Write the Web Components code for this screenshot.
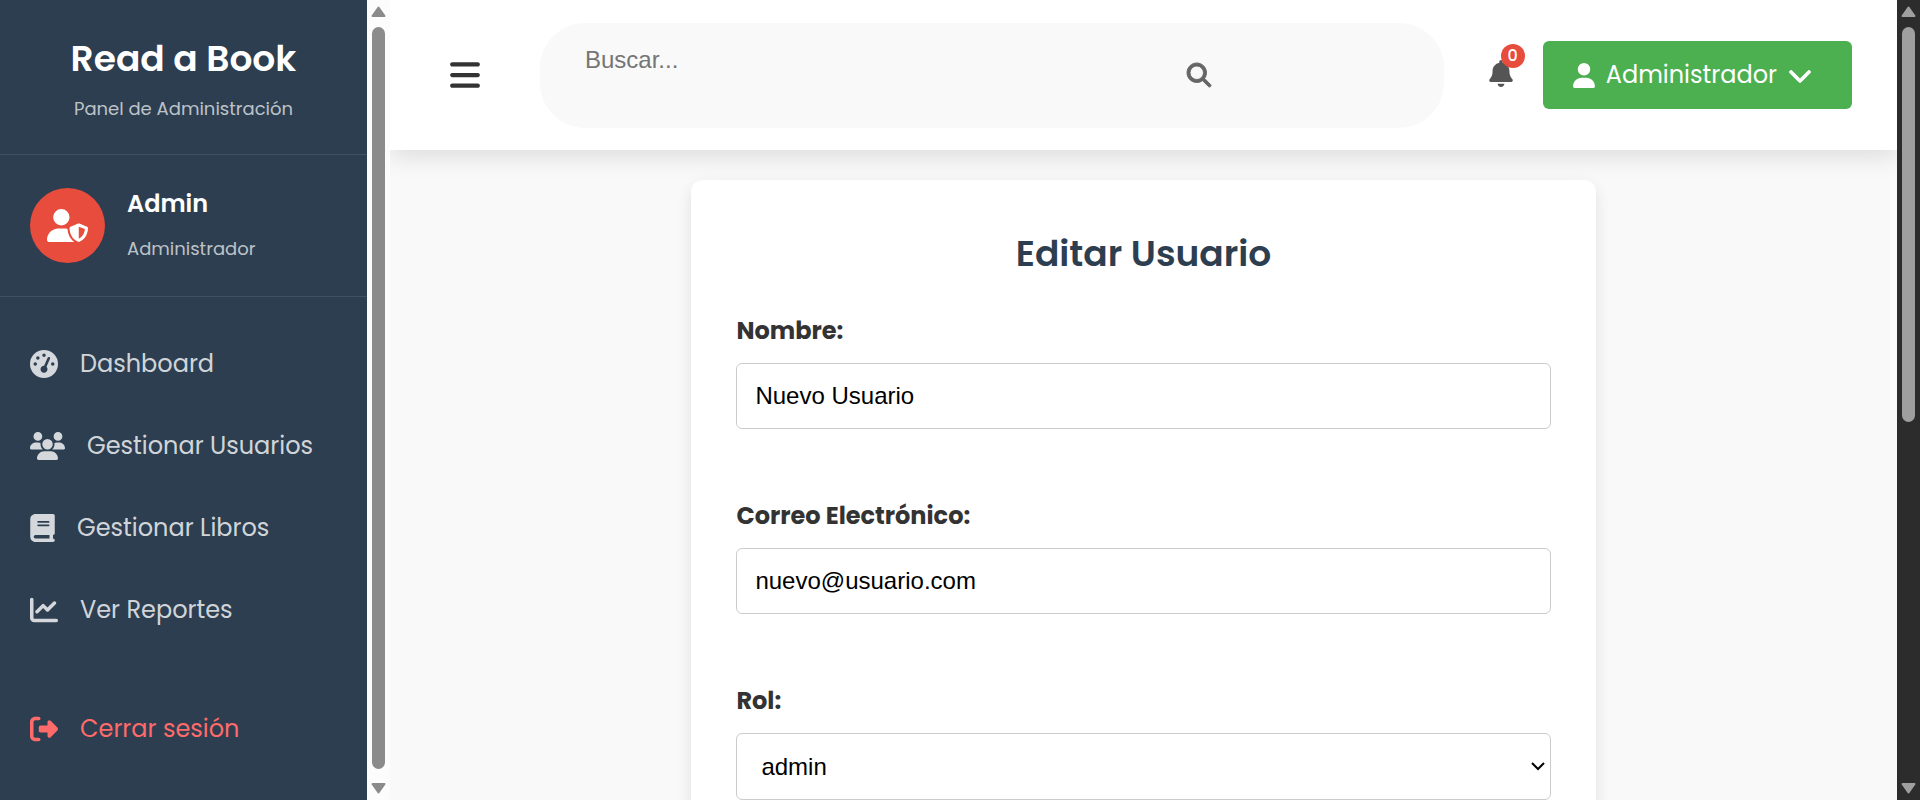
<!DOCTYPE html>
<html lang="es">
<head>
<meta charset="utf-8">
<meta name="viewport" content="width=device-width, initial-scale=1">
<title>Read a Book - Editar Usuario</title>
<style>
  html, body { height: 100%; }
  body {
    margin: 0;
    overflow: hidden;
    background: #f9f9f9;
    color: #333;
    font: 24px/36px Poppins, Inter, "Open Sans", sans-serif;
  }
</style>
</head>
<body>
<app-shell>
  <side-bar slot="side" brand="Read a Book" tagline="Panel de Administración">
    <user-card slot="profile" name="Admin" role-name="Administrador"></user-card>
    <nav-link icon="gauge" href="#dashboard">Dashboard</nav-link>
    <nav-link icon="users" href="#usuarios">Gestionar Usuarios</nav-link>
    <nav-link icon="book" href="#libros">Gestionar Libros</nav-link>
    <nav-link icon="chart" href="#reportes">Ver Reportes</nav-link>
    <nav-link slot="footer" icon="exit" href="#salir" danger>Cerrar sesión</nav-link>
  </side-bar>
  <top-bar slot="top" user="Administrador" count="0"></top-bar>
  <form-card heading="Editar Usuario">
    <form-field label="Nombre:" name="nombre" type="text" value="Nuevo Usuario"></form-field>
    <form-field label="Correo Electrónico:" name="correo" type="email" value="nuevo@usuario.com"></form-field>
    <form-field label="Rol:" name="rol" type="select" options="admin,usuario"></form-field>
  </form-card>
</app-shell>

<script>
const ICONS = {
  bars: [448, 'M0 96C0 78.3 14.3 64 32 64H416c17.7 0 32 14.3 32 32s-14.3 32-32 32H32C14.3 128 0 113.7 0 96zM0 256c0-17.7 14.3-32 32-32H416c17.7 0 32 14.3 32 32s-14.3 32-32 32H32c-17.7 0-32-14.3-32-32zM448 416c0 17.7-14.3 32-32 32H32c-17.7 0-32-14.3-32-32s14.3-32 32-32H416c17.7 0 32 14.3 32 32z'],
  search: [512, 'M416 208c0 45.9-14.9 88.3-40 122.7L502.6 457.4c12.5 12.5 12.5 32.8 0 45.3s-32.8 12.5-45.3 0L330.7 376c-34.4 25.2-76.8 40-122.7 40C93.1 416 0 322.9 0 208S93.1 0 208 0S416 93.1 416 208zM208 352a144 144 0 1 0 0-288 144 144 0 1 0 0 288z'],
  bell: [448, 'M224 0c-17.7 0-32 14.3-32 32V51.2C119 66 64 130.6 64 208v18.8c0 47-17.3 92.4-48.5 127.6l-7.4 8.3c-8.4 9.4-10.4 22.9-5.3 34.4S19.4 416 32 416H416c12.6 0 24-7.4 29.2-18.9s3.1-25-5.3-34.4l-7.4-8.3C401.3 319.2 384 273.9 384 226.8V208c0-77.4-55-142-128-156.8V32c0-17.7-14.3-32-32-32zm45.3 493.3c12-12 18.7-28.3 18.7-45.3H224 160c0 17 6.7 33.3 18.7 45.3s28.3 18.7 45.3 18.7s33.3-6.7 45.3-18.7z'],
  user: [448, 'M224 256A128 128 0 1 0 224 0a128 128 0 1 0 0 256zm-45.7 48C79.8 304 0 383.8 0 482.3C0 498.7 13.3 512 29.7 512H418.3c16.4 0 29.7-13.3 29.7-29.7C448 383.8 368.2 304 269.7 304H178.3z'],
  chevron: [512, 'M233.4 406.6c12.5 12.5 32.8 12.5 45.3 0l192-192c12.5-12.5 12.5-32.8 0-45.3s-32.8-12.5-45.3 0L256 338.7 86.6 169.4c-12.5-12.5-32.8-12.5-45.3 0s-12.5 32.8 0 45.3l192 192z'],
  shield: [640, 'M224 256A128 128 0 1 0 224 0a128 128 0 1 0 0 256zm-45.7 48C79.8 304 0 383.8 0 482.3C0 498.7 13.3 512 29.7 512H418.3c1.8 0 3.5-.2 5.3-.5c-76.3-55.1-99.8-141-103.1-200.2c-16.1-4.8-33.1-7.3-50.7-7.3H178.3zm308.8-78.3l-120 48C358 277.4 352 286.2 352 296c0 63.3 25.9 168.8 134.8 214.2c5.9 2.5 12.6 2.5 18.5 0C614.1 464.8 640 359.3 640 296c0-9.8-6-18.6-15.1-22.3l-120-48c-5.7-2.3-12.1-2.3-17.8 0zM591.4 312c-3.9 50.7-27.2 116.7-95.4 149.7V273.8L591.4 312z'],
  gauge: [512, 'M0 256a256 256 0 1 1 512 0A256 256 0 1 1 0 256zM288 96a32 32 0 1 0-64 0 32 32 0 1 0 64 0zM256 416c35.3 0 64-28.7 64-64c0-17.4-6.9-33.1-18.1-44.6L366 161.7c5.3-12.1-.2-26.3-12.3-31.6s-26.3 .2-31.6 12.3L257.9 288c-.6 0-1.3 0-1.9 0c-35.3 0-64 28.7-64 64s28.7 64 64 64zM176 144a32 32 0 1 0-64 0 32 32 0 1 0 64 0zM96 288a32 32 0 1 0 0-64 32 32 0 1 0 0 64zm352-32a32 32 0 1 0-64 0 32 32 0 1 0 64 0z'],
  users: [640, 'M144 0a80 80 0 1 1 0 160A80 80 0 1 1 144 0zM512 0a80 80 0 1 1 0 160A80 80 0 1 1 512 0zM0 298.7C0 239.8 47.8 192 106.7 192h42.7c15.9 0 31 3.5 44.6 9.7c-1.3 7.2-1.9 14.7-1.9 22.3c0 38.2 16.8 72.5 43.3 96c-.2 0-.4 0-.7 0H21.3C9.6 320 0 310.4 0 298.7zM405.3 320c-.2 0-.4 0-.7 0c26.6-23.5 43.3-57.8 43.3-96c0-7.6-.7-15-1.9-22.3c13.6-6.3 28.7-9.7 44.6-9.7h42.7C592.2 192 640 239.8 640 298.7c0 11.8-9.6 21.3-21.3 21.3H405.3zM224 224a96 96 0 1 1 192 0 96 96 0 1 1-192 0zM128 485.3C128 411.7 187.7 352 261.3 352H378.7C452.3 352 512 411.7 512 485.3c0 14.7-11.9 26.7-26.7 26.7H154.7c-14.7 0-26.7-11.9-26.7-26.7z'],
  book: [448, 'M96 0C43 0 0 43 0 96V416c0 53 43 96 96 96H384h32c17.7 0 32-14.3 32-32s-14.3-32-32-32V384c17.7 0 32-14.3 32-32V32c0-17.7-14.3-32-32-32H384 96zm0 384H352v64H96c-17.7 0-32-14.3-32-32s14.3-32 32-32zm32-240c0-8.8 7.2-16 16-16H336c8.8 0 16 7.2 16 16s-7.2 16-16 16H144c-8.8 0-16-7.2-16-16zm16 48H336c8.8 0 16 7.2 16 16s-7.2 16-16 16H144c-8.8 0-16-7.2-16-16s7.2-16 16-16z'],
  chart: [512, 'M64 64c0-17.7-14.3-32-32-32S0 46.3 0 64V400c0 44.2 35.8 80 80 80H480c17.7 0 32-14.3 32-32s-14.3-32-32-32H80c-8.8 0-16-7.2-16-16V64zm406.6 86.6c12.5-12.5 12.5-32.8 0-45.3s-32.8-12.5-45.3 0L320 210.7l-57.4-57.4c-12.5-12.5-32.8-12.5-45.3 0l-112 112c-12.5 12.5-12.5 32.8 0 45.3s32.8 12.5 45.3 0L240 221.3l57.4 57.4c12.5 12.5 32.8 12.5 45.3 0l128-128z'],
  exit: [512, 'M377.9 105.9L500.7 228.7c7.2 7.2 11.3 17.1 11.3 27.3s-4.1 20.1-11.3 27.3L377.9 406.1c-6.4 6.4-15 9.9-24 9.9c-18.7 0-33.9-15.2-33.9-33.9l0-62.1-128 0c-17.7 0-32-14.3-32-32l0-64c0-17.7 14.3-32 32-32l128 0 0-62.1c0-18.7 15.2-33.9 33.9-33.9c9 0 17.6 3.6 24 9.9zM160 96L96 96c-17.7 0-32 14.3-32 32l0 256c0 17.7 14.3 32 32 32l64 0c17.7 0 32 14.3 32 32s-14.3 32-32 32l-64 0c-53 0-96-43-96-96L0 128C0 75 43 32 96 32l64 0c17.7 0 32 14.3 32 32s-14.3 32-32 32z']
};

class Base extends HTMLElement {
  connectedCallback() {
    if (this.shadowRoot) return;
    this.attachShadow({ mode: 'open' }).innerHTML =
      `<style>:host,*{box-sizing:border-box}${this.css()}</style>${this.html()}`;
  }
  attr(name) { return this.getAttribute(name) || ''; }
}

/* <ui-icon name size bold>: size is the glyph height in pixels, bold thickens its strokes */
customElements.define('ui-icon', class extends Base {
  css() {
    return `:host{display:block;flex:none}svg{display:block;overflow:visible;fill:currentColor}
      :host([bold]) svg{stroke:currentColor;stroke-width:20}`;
  }
  html() {
    const [w, d] = ICONS[this.attr('name')];
    const h = Number(this.attr('size'));
    return `<svg aria-hidden="true" width="${Math.round(w * h / 512)}" height="${h}" viewBox="0 0 ${w} 512"><path d="${d}"/></svg>`;
  }
});

customElements.define('scroll-rail', class extends Base {
  css() {
    return `
      :host{display:flex;flex-direction:column;align-items:center;flex:none;width:23px;padding:6px 0;gap:10px;
        background:var(--rail,#fcfcfc);color:var(--thumb,#8b8b8b)}
      svg{display:block;flex:none;fill:currentColor;stroke:currentColor;stroke-width:2;stroke-linejoin:round}
      .track{flex:1;width:13px}
      .thumb{height:var(--size,100%);border-radius:7px;background:currentColor}`;
  }
  html() {
    return `<svg width="15" height="11" viewBox="0 0 15 11"><path d="M7.5 1.5 1.5 10h12z"/></svg>
      <div class="track"><div class="thumb"></div></div>
      <svg width="15" height="11" viewBox="0 0 15 11"><path d="M7.5 9.5 1.5 1h12z"/></svg>`;
  }
});

customElements.define('app-shell', class extends Base {
  css() {
    return `
      :host{display:flex;height:100vh;overflow:hidden}
      .page{flex:1;min-width:0;display:flex;flex-direction:column;overflow:hidden;background:#f9f9f9}
      main{flex:1;min-height:0;overflow:hidden;padding-top:30px;display:flex;justify-content:center;align-items:flex-start}
      .outer{--rail:#2c2c2c;--thumb:#9f9f9f;--size:53%}`;
  }
  html() {
    return `<slot name="side"></slot>
      <div class="page"><slot name="top"></slot><main><slot></slot></main></div>
      <scroll-rail class="outer"></scroll-rail>`;
  }
});

customElements.define('side-bar', class extends Base {
  css() {
    return `
      :host{display:flex;flex:none;width:390px}
      aside{flex:1;min-width:0;background:#2c3e50;color:#fff;overflow:hidden}
      header{padding:32px 30px 30px;text-align:center;border-bottom:1px solid rgba(255,255,255,.1)}
      h1{margin:0 0 8px;font-size:36px;line-height:54px;font-weight:600}
      p{margin:0;font-size:18px;line-height:30px;color:rgba(255,255,255,.7)}
      nav{padding-top:26px}
      .footer{padding-top:37px}
      scroll-rail{--size:99.5%}`;
  }
  html() {
    return `<aside>
        <header><h1>${this.attr('brand')}</h1><p>${this.attr('tagline')}</p></header>
        <slot name="profile"></slot>
        <nav><slot></slot><div class="footer"><slot name="footer"></slot></div></nav>
      </aside><scroll-rail></scroll-rail>`;
  }
});

customElements.define('user-card', class extends Base {
  css() {
    return `
      :host{display:flex;align-items:center;gap:22px;padding:31px 30px;border-bottom:1px solid rgba(255,255,255,.1)}
      .avatar{display:grid;place-items:center;flex:none;width:75px;height:75px;border-radius:50%;background:#e74c3c;color:#fff}
      h2{margin:0 0 10px;font-size:24px;line-height:36px;font-weight:600}
      p{margin:0;font-size:18px;line-height:33px;color:rgba(255,255,255,.7)}`;
  }
  html() {
    return `<div class="avatar"><ui-icon name="shield" size="33"></ui-icon></div>
      <div><h2>${this.attr('name')}</h2><p>${this.attr('role-name')}</p></div>`;
  }
});

customElements.define('nav-link', class extends Base {
  css() {
    return `
      :host{display:block;color:rgba(255,255,255,.8)}
      :host([danger]){color:#ff6b6b}
      a{display:flex;align-items:center;gap:22px;padding:23px 30px;color:inherit;text-decoration:none;white-space:nowrap}`;
  }
  html() {
    return `<a href="${this.attr('href')}"><ui-icon name="${this.attr('icon')}" size="28"></ui-icon><span><slot></slot></span></a>`;
  }
});

customElements.define('top-bar', class extends Base {
  css() {
    return `
      :host{display:flex;align-items:center;flex:none;gap:45px;height:150px;padding:0 45px;background:#fff;
        box-shadow:0 6px 24px rgba(0,0,0,.12)}
      button{font:inherit;border:0;margin:0;background:none;cursor:pointer}
      .toggle{padding:15px;color:#333}
      form{flex:1;min-width:0;display:flex;align-items:center;height:105px;padding:0 45px;border-radius:45px;background:#f9f9f9}
      input{width:74%;height:44px;margin:0 0 30px;padding:0;border:0;outline:0;background:none;
        font:24px/36px "Liberation Sans",Arial,sans-serif;color:#333}
      input::placeholder{color:#757575}
      .go{padding:0;color:#666}
      .tools{display:flex;align-items:center;gap:30px}
      .bell{position:relative;padding:0 0 4px;color:#555}
      .badge{position:absolute;top:-16px;right:-12px;width:24px;height:24px;border-radius:50%;background:#e74c3c;
        color:#fff;font-size:16px;line-height:24px;font-weight:500;text-align:center}
      .account{display:flex;align-items:center;gap:11px;padding:16px 40px 16px 30px;border-radius:6px;
        background:#4caf50;color:#fff;white-space:nowrap}`;
  }
  html() {
    return `<button class="toggle" type="button" aria-label="Menú"><ui-icon name="bars" size="34"></ui-icon></button>
      <form role="search">
        <input type="search" placeholder="Buscar..." aria-label="Buscar">
        <button class="go" type="button" aria-label="Buscar"><ui-icon name="search" size="24" bold></ui-icon></button>
      </form>
      <div class="tools">
        <button class="bell" type="button" aria-label="Notificaciones"><ui-icon name="bell" size="27"></ui-icon><span class="badge">${this.attr('count')}</span></button>
        <button class="account" type="button"><ui-icon name="user" size="25"></ui-icon><span>${this.attr('user')}</span><ui-icon name="chevron" size="24" bold></ui-icon></button>
      </div>`;
  }
});

customElements.define('form-card', class extends Base {
  css() {
    return `
      :host{display:block;width:60%;padding:45px;border-radius:12px;background:#fff;box-shadow:0 6px 15px rgba(0,0,0,.1)}
      h2{margin:0 0 30px;font-size:36px;line-height:58px;font-weight:600;color:#2c3e50;text-align:center}
      form{display:grid;gap:69px}`;
  }
  html() { return `<h2>${this.attr('heading')}</h2><form><slot></slot></form>`; }
});

customElements.define('form-field', class extends Base {
  css() {
    return `
      :host{display:block}
      label{display:block;margin-bottom:14px;font-weight:700;color:#333}
      .box{display:grid;align-items:center}
      .box>*{grid-area:1/1}
      input,select{width:100%;height:66px;margin:0;padding:0 18px;border:1px solid #ccc;border-radius:6px;outline:0;
        background:#fff;color:#000;font:24px/36px "Liberation Sans",Arial,sans-serif}
      select{appearance:none;height:67px;padding:0 24px}
      svg{justify-self:end;margin-right:6px;fill:none;stroke:#000;stroke-width:2;pointer-events:none}`;
  }
  html() {
    const id = this.attr('name');
    const control = this.attr('type') === 'select'
      ? `<select id="${id}" name="${id}">${this.attr('options').split(',').map(o => `<option>${o}</option>`).join('')}</select>
         <svg width="14" height="9" viewBox="0 0 14 9" aria-hidden="true"><path d="M1 1l6 6 6-6"/></svg>`
      : `<input id="${id}" name="${id}" type="${this.attr('type')}" value="${this.attr('value')}">`;
    return `<label for="${id}">${this.attr('label')}</label><div class="box">${control}</div>`;
  }
});
</script>
</body>
</html>
